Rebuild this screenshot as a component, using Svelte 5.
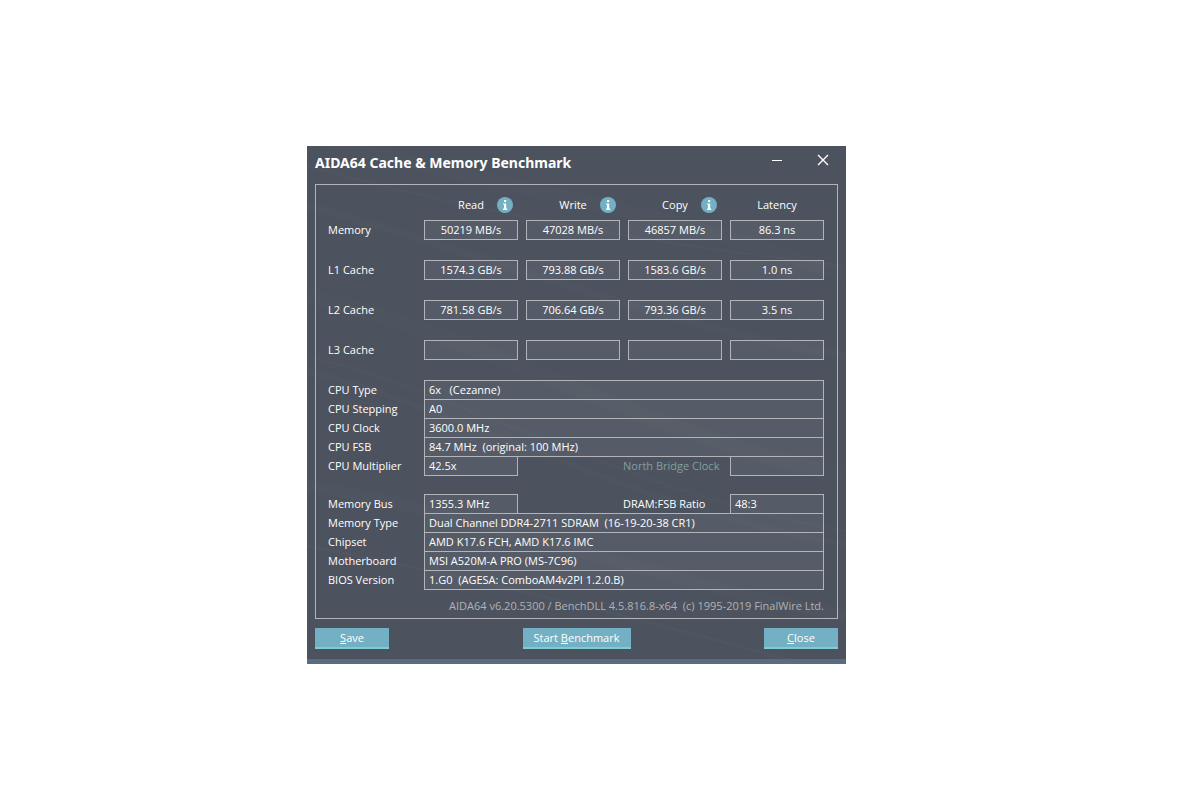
<script>
    const columns = [
        { name: 'Read', info: true },
        { name: 'Write', info: true },
        { name: 'Copy', info: true },
        { name: 'Latency', info: false }
    ];

    const results = [
        { name: 'Memory', values: ['50219 MB/s', '47028 MB/s', '46857 MB/s', '86.3 ns'] },
        { name: 'L1 Cache', values: ['1574.3 GB/s', '793.88 GB/s', '1583.6 GB/s', '1.0 ns'] },
        { name: 'L2 Cache', values: ['781.58 GB/s', '706.64 GB/s', '793.36 GB/s', '3.5 ns'] },
        { name: 'L3 Cache', values: ['', '', '', ''] }
    ];

    // a row with "extra" is split into two short fields
    const sections = [
        [
            { id: 'cpu-type', label: 'CPU Type', value: '6x   (Cezanne)' },
            { id: 'cpu-stepping', label: 'CPU Stepping', value: 'A0' },
            { id: 'cpu-clock', label: 'CPU Clock', value: '3600.0 MHz' },
            { id: 'cpu-fsb', label: 'CPU FSB', value: '84.7 MHz  (original: 100 MHz)' },
            {
                id: 'cpu-multiplier', label: 'CPU Multiplier', value: '42.5x',
                extra: { id: 'nb-clock', label: 'North Bridge Clock', value: '', disabled: true }
            }
        ],
        [
            {
                id: 'memory-bus', label: 'Memory Bus', value: '1355.3 MHz',
                extra: { id: 'dram-ratio', label: 'DRAM:FSB Ratio', value: '48:3', disabled: false }
            },
            { id: 'memory-type', label: 'Memory Type', value: 'Dual Channel DDR4-2711 SDRAM  (16-19-20-38 CR1)' },
            { id: 'chipset', label: 'Chipset', value: 'AMD K17.6 FCH, AMD K17.6 IMC' },
            { id: 'motherboard', label: 'Motherboard', value: 'MSI A520M-A PRO (MS-7C96)' },
            { id: 'bios', label: 'BIOS Version', value: '1.G0  (AGESA: ComboAM4v2PI 1.2.0.B)' }
        ]
    ];
</script>

<main>
    <div class="window">
        <svg class="streaks" viewBox="0 0 539 513" preserveAspectRatio="none" aria-hidden="true">
            <g fill="none" stroke="#fff">
                <path d="M0 -10C180 40 350 60 539 130" stroke-width="14" opacity=".012" />
                <path d="M0 60C190 110 350 180 539 210" stroke-width="8" opacity=".014" />
                <path d="M0 20C180 70 360 100 539 120" stroke-width="2" opacity=".018" />
                <path d="M0 150C180 190 340 290 539 330" stroke-width="16" opacity=".012" />
                <path d="M0 210C160 250 330 350 539 385" stroke-width="2" opacity=".02" />
                <path d="M0 225C160 265 330 365 539 398" stroke-width="6" opacity=".014" />
                <path d="M0 340C160 365 330 430 539 470" stroke-width="12" opacity=".014" />
                <path d="M0 400C160 430 330 470 539 530" stroke-width="3" opacity=".018" />
            </g>
        </svg>

        <header>
            <h1>AIDA64 Cache &amp; Memory Benchmark</h1>
            <button type="button" class="caption" aria-label="Minimize">
                <svg width="12" height="12" viewBox="0 0 12 12"><path d="M1 6.5h10" /></svg>
            </button>
            <button type="button" class="caption" aria-label="Close window">
                <svg width="12" height="12" viewBox="0 0 12 12"><path d="M1 1l10 10M11 1L1 11" stroke-width="1.4" /></svg>
            </button>
        </header>

        <section class="panel">
            <table>
                <thead>
                    <tr>
                        <td class="name"></td>
                        {#each columns as column}
                            <th scope="col">
                                <div class="heading">
                                    <span>{column.name}</span>
                                    {#if column.info}
                                        <button type="button" class="info" aria-label="About {column.name}">
                                            <svg width="16" height="16" viewBox="0 0 16 16">
                                                <circle cx="8" cy="8" r="8" fill="#73b0c3" />
                                                <path d="M7 3h2.2v2H7zM6 6.4h3.2v5.2h1V13H6v-1.4h1V7.6H6z" fill="#fff" />
                                            </svg>
                                        </button>
                                    {/if}
                                </div>
                            </th>
                        {/each}
                    </tr>
                </thead>
                <tbody>
                    {#each results as row}
                        <tr>
                            <th scope="row" class="name">{row.name}</th>
                            {#each row.values as value}
                                <td><div class="result">{value}</div></td>
                            {/each}
                        </tr>
                    {/each}
                </tbody>
            </table>

            {#each sections as rows}
                <div class="details">
                    {#each rows as row}
                        <div class="row">
                            <label for={row.id}>{row.label}</label>
                            <input id={row.id} class:short={row.extra} type="text" readonly value={row.value} />
                            {#if row.extra}
                                <label class="second" class:disabled={row.extra.disabled} for={row.extra.id}>{row.extra.label}</label>
                                <input id={row.extra.id} class="short" type="text" readonly value={row.extra.value} />
                            {/if}
                        </div>
                    {/each}
                </div>
            {/each}

            <p class="version">AIDA64 v6.20.5300 / BenchDLL 4.5.816.8-x64&nbsp; (c) 1995-2019 FinalWire Ltd.</p>
        </section>

        <footer>
            <button type="button" class="action"><u>S</u>ave</button>
            <button type="button" class="action wide">Start <u>B</u>enchmark</button>
            <button type="button" class="action"><u>C</u>lose</button>
        </footer>
    </div>
</main>

<style>
    :global(body) {
        background: #fff;
    }

    main {
        display: flex;
        align-items: center;
        justify-content: center;
        min-height: 100vh;
        padding: 10px 47px 0 0;
        box-sizing: border-box;
        font: 11px/16px 'Open Sans', 'Noto Sans', sans-serif;
        color: #fff;
    }

    button, input {
        font: inherit;
        color: inherit;
        border-radius: 0;
        box-sizing: border-box;
    }

    .window {
        position: relative;
        width: 100%;
        max-width: 539px;
        padding: 0 8px 10px;
        box-sizing: border-box;
        background: #4c525e;
        border-bottom: 5px solid #5c6b80;
    }

    .streaks {
        position: absolute;
        inset: 0;
        width: 100%;
        height: 100%;
    }

    header, .panel, footer {
        position: relative;
    }

    header {
        display: flex;
        height: 38px;
    }

    h1 {
        flex: 1;
        margin: 0;
        font-family: 'Noto Sans', 'Open Sans', sans-serif;
        font-size: 14px;
        line-height: 34px;
        font-weight: 700;
    }

    .caption {
        display: flex;
        align-items: center;
        justify-content: center;
        width: 46px;
        height: 28px;
        margin-right: -8px;
        padding: 0;
        border: 0;
        background: none;
    }

    .caption + .caption {
        margin-left: 8px;
    }

    .caption path {
        fill: none;
        stroke: #fff;
    }

    .panel {
        padding: 8px 13px 4px 12px;
        border: 1px solid #b2b4b9;
    }

    table {
        width: 100%;
        table-layout: fixed;
        border-collapse: collapse;
    }

    th, td {
        padding: 0 0 20px 8px;
        font-weight: 400;
    }

    thead th, thead td {
        padding-bottom: 7px;
    }

    .name {
        width: 88px;
        padding-left: 0;
        text-align: left;
    }

    .heading {
        display: grid;
        grid-template-columns: 1fr auto 1fr;
        column-gap: 13px;
        height: 20px;
        align-items: center;
    }

    .heading span {
        grid-column: 2;
        line-height: 24px;
    }

    .info {
        width: 16px;
        height: 16px;
        padding: 0;
        border: 0;
        background: none;
    }

    .info svg {
        display: block;
    }

    .result {
        height: 20px;
        box-sizing: border-box;
        border: 1px solid #b2b4b9;
        background: rgba(255, 255, 255, 0.06);
        line-height: 18px;
        text-align: center;
    }

    .details {
        margin-bottom: 19px;
    }

    .row {
        display: flex;
        height: 19px;
        line-height: 20px;
    }

    .row label {
        flex: none;
        width: 96px;
    }

    .row .second {
        width: 107px;
        margin-left: auto;
    }

    .row .disabled {
        color: #82a09f;
    }

    .row input {
        flex: 1;
        min-width: 0;
        height: 20px;
        padding: 0 4px;
        border: 1px solid #b2b4b9;
        background: rgba(255, 255, 255, 0.06);
        outline: none;
    }

    .row .short {
        flex: 0 1 94px;
    }

    .details + .version {
        margin: -10px 0 0;
    }

    .version {
        color: #b0b2b5;
        text-align: right;
    }

    footer {
        display: flex;
        justify-content: space-between;
        margin-top: 9px;
    }

    .action {
        width: 74px;
        height: 21px;
        padding: 0;
        border: 0;
        border-bottom: 2px solid #80ccd3;
        background: #73b0c3;
        line-height: 18px;
    }

    .wide {
        width: 108px;
    }
</style>
